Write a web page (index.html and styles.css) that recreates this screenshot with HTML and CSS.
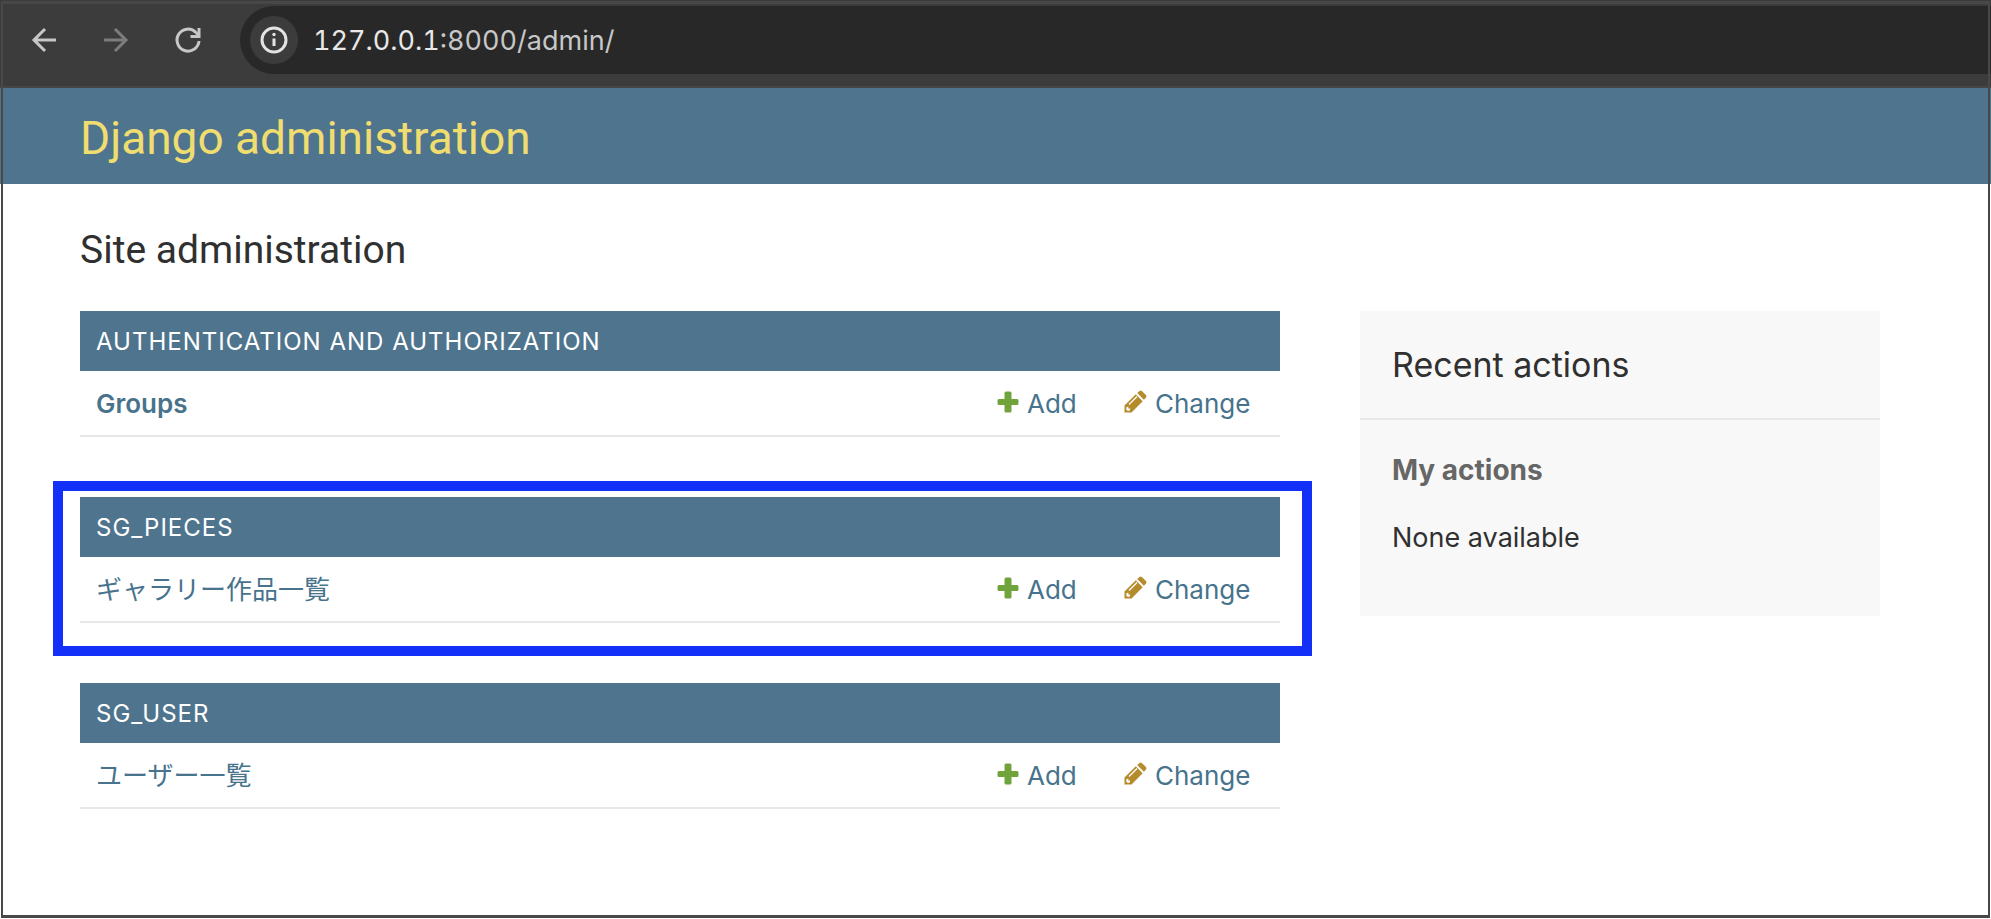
FILE: index.html
```html
<!DOCTYPE html>
<html lang="en">
<head>
<meta charset="utf-8">
<title>Site administration | Django site admin</title>
<link rel="stylesheet" href="styles.css">
</head>
<body>
<svg class="sprite" aria-hidden="true">
  <symbol id="plus" viewBox="0 0 22 22"><path d="M9 0.5h4q1.5 0 1.5 1.5v6h5.500q1.500 0 1.500 1.500v3q0 1.500-1.500 1.500h-5.500v6q0 1.500-1.500 1.500h-4q-1.500 0-1.500-1.500v-6h-5.500q-1.500 0-1.500-1.500v-3q0-1.500 1.500-1.500h5.500v-6q0-1.500 1.500-1.500z" fill="#70a33b"/></symbol>
  <symbol id="pencil" viewBox="0 0 24 24"><path d="M1.500 15.500L12.800 4.300L19.700 11.200L8.500 22.500H1.500z" fill="#b48c2c"/><path d="M14.200 3L16.600 0.900Q17.700 0 18.800 0.900L23 5.100Q24 6.200 23 7.400L20.900 9.700z" fill="#b48c2c"/><path d="M6 14.500L14 6.500" stroke="#fff" stroke-width="1.200"/><path d="M3.500 17.200l1.800-.6v2h2l-.7 2-1.700.5-1.700-1.700z" fill="#fff"/></symbol>
</svg>
<div class="window">
  <nav class="toolbar" aria-label="Browser">
    <button class="nav-button" aria-label="Back"><svg viewBox="0 0 32 32"><path d="M28 16H6M17 5L6 16L17 27"/></svg></button>
    <button class="nav-button nav-disabled" aria-label="Forward" disabled><svg viewBox="0 0 32 32"><path d="M4 16h22M15 5l11 11L15 27"/></svg></button>
    <button class="nav-button" aria-label="Reload"><svg viewBox="0 0 32 32"><path d="M27 17A11 11 0 1 1 24 8.500L27 11.500"/><path d="M27 4v8.500h-8.500"/></svg></button>
    <div class="address">
      <button class="site-info" aria-label="Site information"><svg viewBox="0 0 28 28"><circle cx="14" cy="14" r="12"/><path d="M14 12.500v7.500"/><circle class="dot" cx="14" cy="8.500" r="1.700"/></svg></button>
      <span class="url"><b>127.0.0.1</b>:8000/admin/</span>
    </div>
  </nav>
  <header class="header"><a href="#" class="brand">Django administration</a></header>
  <div class="page">
    <h1 class="title">Site administration</h1>
    <div class="columns">
      <main class="apps">
        <table class="module">
          <caption><a href="#">AUTHENTICATION AND AUTHORIZATION</a></caption>
          <tr><th scope="row"><a href="#">Groups</a></th><td class="add"><a href="#"><svg class="plus"><use href="#plus"/></svg>Add</a></td><td class="change"><a href="#"><svg class="pencil"><use href="#pencil"/></svg>Change</a></td></tr>
        </table>
        <div class="highlight">
          <table class="module">
            <caption><a href="#">SG_PIECES</a></caption>
            <tr><th scope="row" class="ja" lang="ja"><a href="#">ギャラリー作品一覧</a></th><td class="add"><a href="#"><svg class="plus"><use href="#plus"/></svg>Add</a></td><td class="change"><a href="#"><svg class="pencil"><use href="#pencil"/></svg>Change</a></td></tr>
          </table>
        </div>
        <table class="module">
          <caption><a href="#">SG_USER</a></caption>
          <tr><th scope="row" class="ja" lang="ja"><a href="#">ユーザー一覧</a></th><td class="add"><a href="#"><svg class="plus"><use href="#plus"/></svg>Add</a></td><td class="change"><a href="#"><svg class="pencil"><use href="#pencil"/></svg>Change</a></td></tr>
        </table>
      </main>
      <aside class="recent">
        <h2>Recent actions</h2>
        <h3>My actions</h3>
        <p>None available</p>
      </aside>
    </div>
  </div>
</div>
</body>
</html>
```
FILE: styles.css
```css
* { box-sizing: border-box; }
body {
  margin: 0;
  background: #fff;
  color: #303030;
  font-family: Inter, "Noto Sans CJK JP", sans-serif;
  font-size: 27px;
}
a { color: #47738c; text-decoration: none; }
.sprite { position: absolute; width: 0; height: 0; }
.window {
  position: relative;
  display: flex;
  flex-direction: column;
  min-height: 100vh;
}
/* window edge drawn over the toolbar and page */
.window::after {
  content: "";
  position: absolute;
  inset: 1px;
  border: 3px solid #484848;
  border-right-width: 2px;
  border-left-width: 2px;
  pointer-events: none;
}

.toolbar {
  display: flex;
  align-items: center;
  height: 88px;
  padding: 6px 0 12px 28px;
  background: #3c3c3c;
  border-bottom: 2px solid #464646;
}
.nav-button {
  width: 32px;
  height: 32px;
  margin-right: 40px;
  padding: 0;
  border: 0;
  background: none;
}
.nav-button svg { display: block; fill: none; stroke: #c7c7c7; stroke-width: 3; }
.nav-disabled svg { stroke: #7c7c7c; }
.address {
  display: flex;
  flex: 1;
  align-items: center;
  gap: 15px;
  height: 68px;
  margin-left: -4px;
  padding-left: 10px;
  border-radius: 34px 0 0 34px;
  background: #282828;
}
.site-info {
  display: grid;
  place-items: center;
  width: 48px;
  height: 48px;
  padding: 0;
  border: 0;
  border-radius: 50%;
  background: #3c3c3c;
}
.site-info svg { width: 28px; height: 28px; fill: none; stroke: #e3e3e3; stroke-width: 3; }
.site-info .dot { fill: #e3e3e3; stroke: none; }
.url { color: #c7c7c7; font-variant-numeric: tabular-nums; }
.url b { color: #e8e8e8; font-weight: 400; }

.header {
  display: flex;
  align-items: center;
  height: 96px;
  padding: 4px 80px 0;
  background: #4f748e;
}
.brand { color: #f0dd70; font-family: Roboto, sans-serif; font-size: 46px; font-weight: 400; }

.page { padding: 42px 111px 60px 80px; }
.title { margin: 0 0 37px; font-family: Roboto, sans-serif; font-size: 39px; font-weight: 400; line-height: 48px; }
.columns { display: flex; align-items: flex-start; gap: 80px; }
.apps { display: flex; flex: 30; flex-direction: column; gap: 60px; min-width: 0; }
.module { width: 100%; border-spacing: 0; }
.module caption {
  padding: 1px 16px 0;
  background: #4f748e;
  font-size: 24px;
  line-height: 59px;
  letter-spacing: 1px;
  text-align: left;
}
.module caption a { color: #fff; }
.module th, .module td {
  height: 66px;
  padding: 0;
  border-bottom: 2px solid #e8e8e8;
  font-size: 26px;
  font-weight: 400;
  text-align: left;
}
.module th { padding-left: 16px; font-weight: 600; }
.module td a { display: flex; align-items: center; }
.module .ja { padding-bottom: 4px; font-weight: 400; }
.add { width: 126px; }
.change { width: 157px; }
.plus { width: 22px; height: 22px; margin: 0 8px 2px 0; }
.pencil { width: 24px; height: 24px; margin: 0 8px 2px 0; }

.highlight { position: relative; }
.highlight::after {
  content: "";
  position: absolute;
  inset: -16px -32px -33px -27px;
  border: 10px solid #1230f8;
  pointer-events: none;
}

.recent { flex: 13; padding-bottom: 60px; background: #f8f8f8; }
.recent h2 {
  margin: 0;
  padding: 32px 32px 31px;
  border-bottom: 2px solid #e8e8e8;
  font-size: 34px;
  font-weight: 400;
  line-height: 44px;
}
.recent h3 { margin: 32px 32px 0; color: #666; font-size: 28px; font-weight: 700; line-height: 36px; }
.recent p { margin: 32px 32px 0; line-height: 36px; }
```
